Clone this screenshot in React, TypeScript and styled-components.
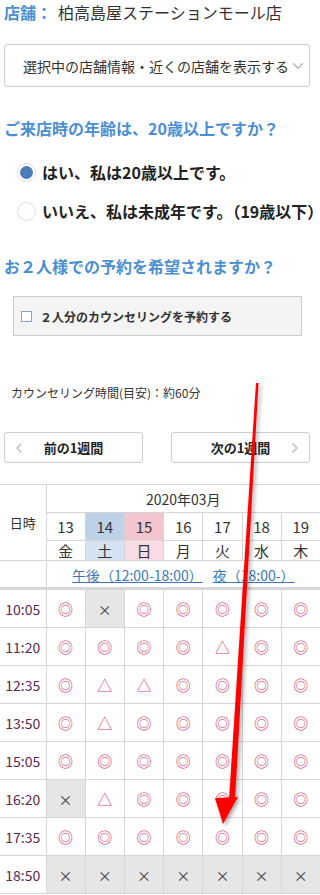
import styled, { createGlobalStyle } from 'styled-components';
import { ChevronDown, ChevronLeft, ChevronRight } from 'lucide-react';

const GlobalStyle = createGlobalStyle`
  html, body {
    margin: 0;
    padding: 0;
    background: #fff;
  }
  body {
    font-family: "Noto Sans CJK JP", "Noto Sans", sans-serif;
    color: #333;
  }
`;

const Page = styled.div`
  position: relative;
  width: 320px;
  height: 895px;
  overflow: hidden;
`;

const Section = styled.div`
  padding: 0 4px;
`;

const StoreLine = styled.div`
  font-size: 16px;
  line-height: 24px;
  color: #333;
`;

const StoreLabel = styled.span`
  color: #4b8fd1;
  font-weight: bold;
  margin-right: 6px;
`;

const Select = styled.div`
  margin-top: 20px;
  width: 306px;
  height: 43px;
  box-sizing: border-box;
  border: 1px solid #ccc;
  border-radius: 3px;
  display: flex;
  align-items: center;
  justify-content: flex-end;
  padding-right: 2px;
  font-size: 14px;
  color: #333;
  white-space: nowrap;
`;

const Question = styled.h2<{ $top: number }>`
  margin: ${(p) => p.$top}px 0 0;
  font-size: 16px;
  line-height: 24px;
  font-weight: bold;
  color: #4b8fd1;
  white-space: nowrap;
`;

const RadioList = styled.div`
  margin-top: 20px;
  padding-left: 13px;
  display: flex;
  flex-direction: column;
  gap: 15px;
`;

const RadioItem = styled.label`
  display: flex;
  align-items: center;
  gap: 6px;
  height: 24px;
  font-size: 16px;
  font-weight: bold;
  color: #222;
  white-space: nowrap;
`;

const RadioMark = styled.span<{ $checked?: boolean }>`
  width: 19px;
  height: 19px;
  box-sizing: border-box;
  border: 1px solid #ddd;
  border-radius: 50%;
  flex: none;
  display: flex;
  align-items: center;
  justify-content: center;
  background: #fff;

  &::after {
    content: '';
    width: 13px;
    height: 13px;
    border-radius: 50%;
    background: ${(p) => (p.$checked ? '#4a7ebb' : 'transparent')};
  }
`;

const CheckPanel = styled.label`
  margin: 18px 0 0 9px;
  width: 289px;
  height: 40px;
  box-sizing: border-box;
  border: 1px solid #ccc;
  background: #f4f4f4;
  display: flex;
  align-items: center;
  gap: 8px;
  padding-left: 7px;
  font-size: 12px;
  font-weight: bold;
  color: #333;
`;

const CheckBox = styled.span`
  width: 9px;
  height: 9px;
  border: 1px solid #7ea6d6;
  background: #fff;
  flex: none;
`;

const Duration = styled.p`
  margin: 47px 0 0 7px;
  font-size: 12px;
  line-height: 20px;
  color: #333;
`;

const WeekNav = styled.div`
  margin-top: 29px;
  display: flex;
  justify-content: space-between;
  width: 306px;
`;

const WeekButton = styled.button`
  width: 139px;
  height: 31px;
  box-sizing: border-box;
  border: 1px solid #ccc;
  border-radius: 3px;
  background: #fff;
  position: relative;
  font-family: inherit;
  font-size: 13px;
  font-weight: bold;
  color: #222;
  padding: 0;

  svg {
    position: absolute;
    top: 7px;
  }
  .prev {
    left: 6px;
  }
  .next {
    right: 6px;
  }
`;

const Table = styled.table`
  margin-top: 21px;
  width: 321px;
  border-collapse: collapse;
  table-layout: fixed;
  font-size: 15px;
  color: #333;

  td,
  th {
    border: 1px solid #d6d6d6;
    padding: 0;
    text-align: center;
    font-weight: normal;
  }
`;

const CornerCell = styled.th`
  border-left: none !important;
  font-size: 13px;
`;

const MonthCell = styled.th`
  height: 27px;
  font-size: 14px;
`;

const DayCell = styled.th<{ $tone?: 'sat' | 'sun' }>`
  height: 27px;
  background: ${(p) => (p.$tone === 'sat' ? '#bdd1e8' : p.$tone === 'sun' ? '#f2c5cf' : '#fff')};
`;

const WeekdayCell = styled.th<{ $tone?: 'sat' | 'sun' }>`
  height: 19px;
  line-height: 19px;
  background: ${(p) => (p.$tone === 'sat' ? '#d4e2f2' : p.$tone === 'sun' ? '#f7dce5' : '#fff')};
`;

const LinkRow = styled.tr`
  th,
  td {
    height: 26px;
    border-bottom: 3px solid #d6d6d6;
  }
`;

const PeriodLink = styled.a`
  color: #3b78b9;
  text-decoration: underline;
  font-size: 14px;
  margin: 0 5px;
  white-space: nowrap;
`;

const TimeCell = styled.td`
  height: 37px;
  border-left: none !important;
  font-size: 14px;
  color: #5a2a55;
`;

const SlotCell = styled.td<{ $full?: boolean }>`
  height: 37px;
  background: ${(p) => (p.$full ? '#e6e6e6' : '#fff')};
  color: ${(p) => (p.$full ? '#444' : '#d8406e')};
  font-size: ${(p) => (p.$full ? '14px' : '15px')};
`;

const ArrowLayer = styled.svg`
  position: absolute;
  left: 0;
  top: 0;
  pointer-events: none;
`;

const days = [
  { d: 13, w: '金' },
  { d: 14, w: '土', tone: 'sat' as const },
  { d: 15, w: '日', tone: 'sun' as const },
  { d: 16, w: '月' },
  { d: 17, w: '火' },
  { d: 18, w: '水' },
  { d: 19, w: '木' },
];

const slots: [string, string][] = [
  ['10:05', 'oxooooo'],
  ['11:20', 'oooo^oo'],
  ['12:35', 'o^^oooo'],
  ['13:50', 'o^ooooo'],
  ['15:05', 'ooooooo'],
  ['16:20', 'x^ooooo'],
  ['17:35', 'ooooooo'],
  ['18:50', 'xxxxxxx'],
];

const markOf: Record<string, string> = { o: '◎', '^': '△', x: '×' };

export default function App() {
  return (
    <Page>
      <GlobalStyle />
      <Section>
        <StoreLine>
          <StoreLabel>店舗：</StoreLabel>柏高島屋ステーションモール店
        </StoreLine>
        <Select>
          選択中の店舗情報・近くの店舗を表示する
          <ChevronDown size={18} color="#b5b5b5" strokeWidth={2} />
        </Select>
        <Question $top={29}>ご来店時の年齢は、20歳以上ですか？</Question>
        <RadioList>
          <RadioItem>
            <RadioMark $checked />
            はい、私は20歳以上です。
          </RadioItem>
          <RadioItem>
            <RadioMark />
            いいえ、私は未成年です。（19歳以下）
          </RadioItem>
        </RadioList>
        <Question $top={31}>お２人様での予約を希望されますか？</Question>
        <CheckPanel>
          <CheckBox />
          ２人分のカウンセリングを予約する
        </CheckPanel>
        <Duration>カウンセリング時間(目安)：約60分</Duration>
        <WeekNav>
          <WeekButton>
            <ChevronLeft className="prev" size={16} color="#bbb" />
            前の1週間
          </WeekButton>
          <WeekButton>
            次の1週間
            <ChevronRight className="next" size={16} color="#bbb" />
          </WeekButton>
        </WeekNav>
      </Section>

      <Table>
        <colgroup>
          <col style={{ width: 46 }} />
          {days.map((d) => (
            <col key={d.d} />
          ))}
        </colgroup>
        <thead>
          <tr>
            <CornerCell rowSpan={3}>日時</CornerCell>
            <MonthCell colSpan={7}>2020年03月</MonthCell>
          </tr>
          <tr>
            {days.map((d) => (
              <DayCell key={d.d} $tone={d.tone}>
                {d.d}
              </DayCell>
            ))}
          </tr>
          <tr>
            {days.map((d) => (
              <WeekdayCell key={d.d} $tone={d.tone}>
                {d.w}
              </WeekdayCell>
            ))}
          </tr>
          <LinkRow>
            <CornerCell />
            <th colSpan={7}>
              <PeriodLink>午後（12:00-18:00）</PeriodLink>
              <PeriodLink>夜（18:00-）</PeriodLink>
            </th>
          </LinkRow>
        </thead>
        <tbody>
          {slots.map(([time, marks]) => (
            <tr key={time}>
              <TimeCell>{time}</TimeCell>
              {marks.split('').map((m, i) => (
                <SlotCell key={i} $full={m === 'x'}>
                  {markOf[m]}
                </SlotCell>
              ))}
            </tr>
          ))}
        </tbody>
      </Table>

      <ArrowLayer width="320" height="895" viewBox="0 0 320 895">
        <defs>
          <filter id="shadow" x="-50%" y="-10%" width="200%" height="120%">
            <feDropShadow dx="2" dy="2" stdDeviation="2" floodColor="#000" floodOpacity="0.35" />
          </filter>
        </defs>
        <g filter="url(#shadow)" fill="#ff0000">
          <polygon points="256,383 258.5,383 235,800 229,800" />
          <polygon points="215,798 238,797 223,824" />
        </g>
      </ArrowLayer>
    </Page>
  );
}
